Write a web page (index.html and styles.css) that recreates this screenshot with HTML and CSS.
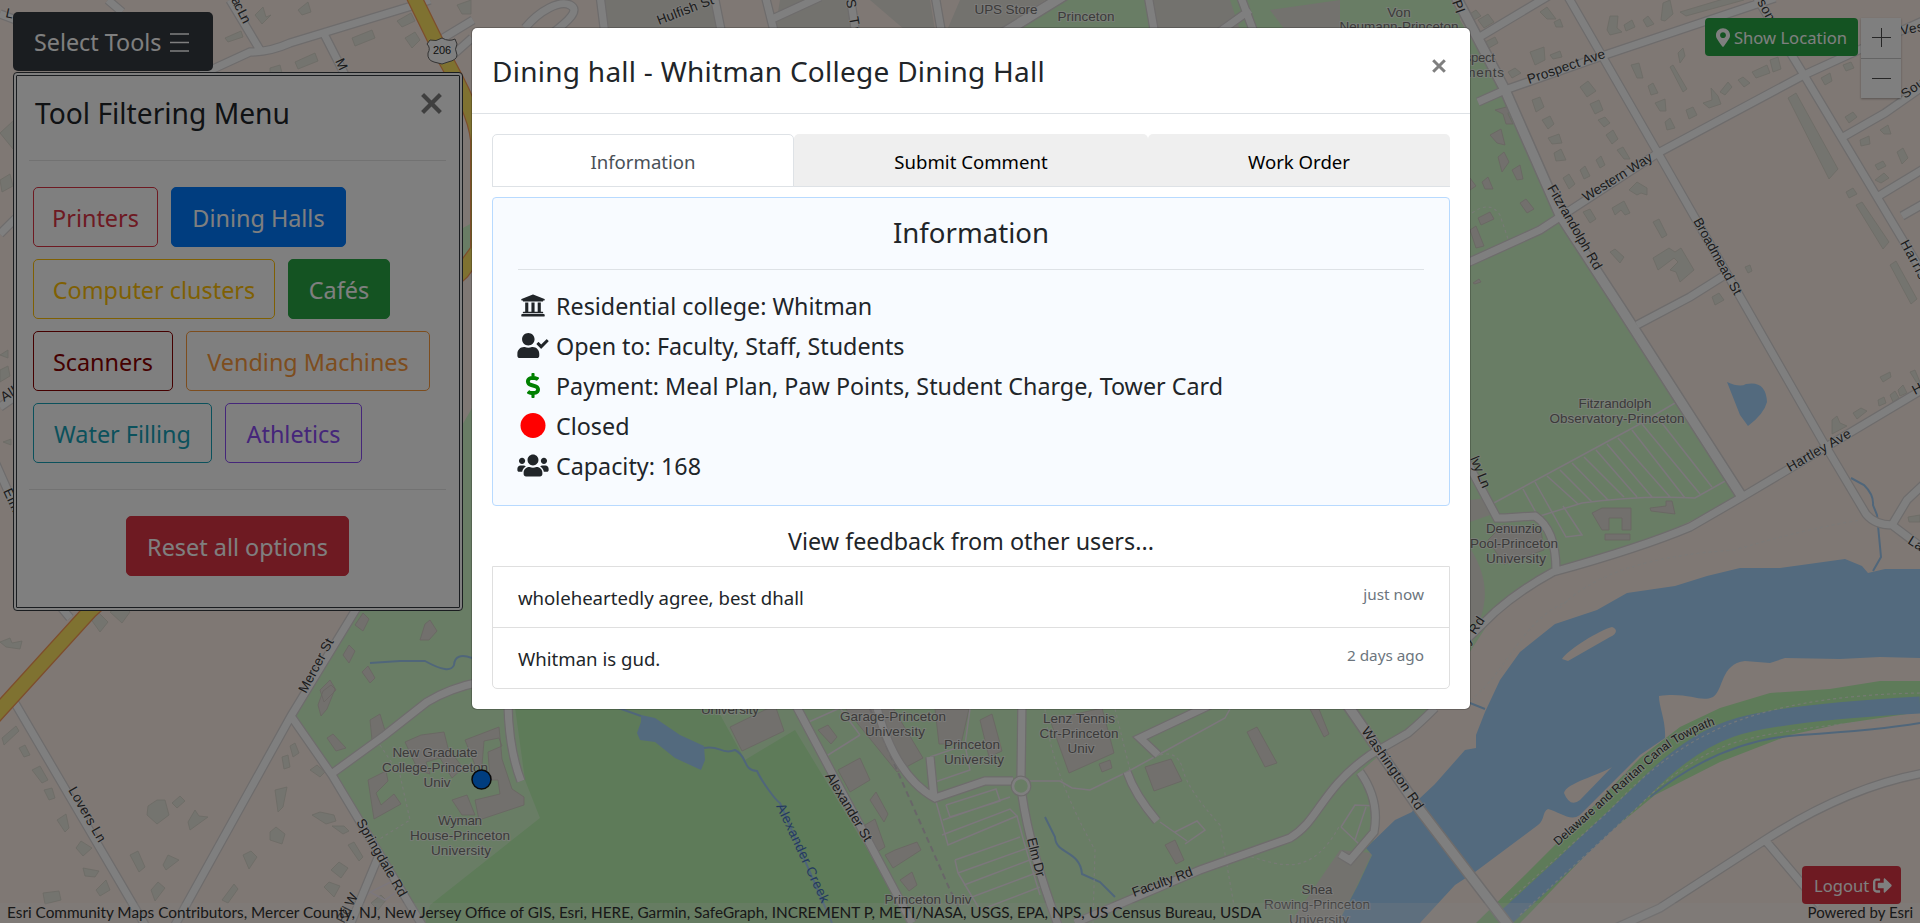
FILE: index.html
```html
<!DOCTYPE html>
<html lang="en">
<head>
<meta charset="utf-8">
<title>Campus Map</title>
<link rel="stylesheet" href="styles.css">
</head>
<body>
<main class="app">
<svg class="map" width="1920" height="923" viewBox="0 0 1920 923">
  <defs>
    <path id="minor" d="M108 0L122 12M200 75L250 52Q270 52 290 43L415 5L430 0M230 0L260 50M322 30L345 75M445 62L472 38M0 234L16 218M0 407L16 396M-5 462L20 518M0 14L16 20M358 606L291 716L175 925M291 716L332 775L422 925M330 775L385 735L427 702Q450 688 480 682M508 705Q509 750 521 781M12 698L145 925M55 600L70 618M379 855L350 925M440 40L473 20M793 700L912 923M875 700Q893 775 935 798L985 781H1013M930 757L934 798M1022 700L1021 777M1022 795Q1030 850 1058 925M1127 772Q1135 795 1157 821M1210 705L1140 738L1158 755M1075 923L1200 870L1290 838C1320 820 1320 790 1370 755L1408 733Q1420 723 1435 708M1478 38L1550 -5M1478 102L1505 90L1605 55L1775 -2M1567 -5L1658 153L1822 440L1866 514Q1875 525 1892 525L1907 500L1925 483M1892 525L1925 550M1465 264L1540 230L1658 153L1804 75L1925 20M1755 -5L1804 75L1925 277M1843 137L1885 113L1925 85M1877 197L1925 168M1902 216L1925 203M1637 325L1690 297L1725 275M1925 388L1742 497L1690 527Q1640 548 1553 572Q1520 590 1495 612L1466 640M1466 460L1497 518H1505L1535 516Q1556 530 1556 570M1360 772Q1380 800 1374 832L1350 860L1340 854M1600 935L1660 908L1765 840Q1850 785 1930 772M1765 840L1820 905M525 28C540 10 560 0 570 5S570 20 550 35M600 -5L605 35M714 -5L722 35M765 -5L775 35M770 20L820 -3M850 -5L856 35M935 -5L942 35M1148 -5L1155 35M1240 -5L1255 35M1215 35L1250 10"/>
    <path id="major" d="M1344 700L1420 810L1512 930M1455 -5L1505 90L1560 215L1622 310L1742 497M1000 35L1065 -5"/>
  </defs>
  <rect class="land" width="1920" height="923"/>
  <!-- campus and parks -->
  <path class="campus" d="M472 408L358 606L292 714L332 775L420 923H1345L1372 855L1378 806L1360 772L1433 709L1497 610L1553 572L1640 545L1742 497L1620 310L1560 215L1505 95L1460 20V0H1170L1060 0L990 35L800 400Z"/>
  <path class="campus" d="M463 228L472 223V255L463 262Z"/>
  <path class="golf" d="M514 700H712L745 760L795 730L912 923H425L430 905L540 818L525 780Z"/>
  <path class="block" d="M600 0H715L720 30H610ZM780 0H850L855 30H775ZM870 0H930L935 30H905ZM960 0H1045L990 35H945ZM1145 0H1230L1240 30H1150ZM1270 10L1340 0V30H1285ZM1470 500L1487 498L1490 515L1470 522ZM1470 548C1487 575 1488 597 1480 620L1470 625ZM1340 850L1372 853L1355 890L1338 923H1290Z"/>
  <!-- water -->
  <path class="water" d="M1597 610L1627 593L1675 586L1707 576L1740 568L1780 568L1845 559L1862 566L1868 573L1885 569H1920V658L1880 657L1840 659L1785 658L1770 663L1745 661C1720 664 1724 690 1713 697C1700 703 1690 692 1659 696C1659 708 1666 720 1665 738L1640 755L1580 815C1570 822 1560 812 1548 809C1542 812 1545 820 1538 825L1475 872L1455 885L1420 923H1338L1358 885L1372 855L1366 848L1395 820L1412 812L1418 800L1435 784L1465 750L1476 748L1476 735L1485 712L1500 680L1520 652L1555 624Z"/>
  <path class="land" d="M1562 659C1567 650 1600 630 1612 627C1618 629 1617 634 1610 637L1568 661ZM1564 793C1566 783 1600 775 1612 767L1580 800Q1570 808 1564 793Z"/>
  <path class="golf" d="M1476 923L1530 870L1580 820L1640 758L1680 727L1720 708L1770 693L1830 689L1880 681H1920V712L1840 724L1790 735L1720 762L1655 795L1600 840L1530 913L1520 923Z"/>
  <path class="canal" d="M1500 923L1560 868L1640 793Q1685 745 1730 729T1920 705"/>
  <path class="water" d="M641 715L655 718L680 735L704 746L705 760L701 770L675 758L655 742L640 740L637 733L641 722ZM1727 382Q1740 388 1746 384Q1766 380 1767 402Q1764 414 1748 426L1740 415Z"/>
  <path class="stream" d="M370 663L400 661L425 661Q450 675 454 665Q455 652 472 658M610 705L641 716M704 748C720 745 722 755 735 750C748 756 742 770 757 771C761 780 775 800 780 803L832 923M1851 478L1864 485Q1874 495 1873 505L1877 515L1881 557L1873 571M1045 817L1055 837C1056 855 1080 850 1082 874L1100 882L1115 897M1470 703L1485 709M1650 797Q1720 740 1800 735T1920 723"/>
  <!-- buildings -->
  <path class="house" d="M255 15l8-8 3 10 5-2-9 9zM298 10l10-8 3 10-9 3zM352 38l20-8 3 8-20 8zM397 21l14-8 4 8-13 6zM225 38l16-7 2 6-15 5zM295 62l20-9 3 8-20 8zM405 38l10-6 5 8-8 8zM457 5l14-5v14l-9 0zM270 68l10-3 2 8-12 0zM0 133l13-12v28zM0 180l10-6 3 12-11 6zM0 355l8-5v8zM3 442l8-3v6zM0 370l8-4 2 10-10 6z"/>
  <path class="house" d="M2 738l14-12 3 5-15 14zM19 748l6-3 5 10-6 2zM32 770l8-4 8 14-6 3zM44 790l8-2 3 10-6 2zM0 642l10-4 2 5 10-2-2 8-14-2zM90 618l8-6 10 10-8 10zM110 612l12-8 8 8-8 11zM148 806l9-6h8l4 15-12 9-10-9zM172 803l8-7 5 5-8 7zM188 822l7-12 4 6 9 1-18 13zM57 820l9-6 3 14-4 4zM76 848l5-7 11 7-9 8zM83 868l16 3-4 6-10-1zM96 890l10-10 4 10-10 6zM43 893l16-2 2 9-16 4zM130 855l8-4 7 16-6 5zM163 865l5-10 11 5-13 10zM151 890l7-8 7 6-10 13zM243 855l8-4 6 6-8 12zM275 790l12-3-4 20-5 5zM270 832l6-5 9 7-3 10-12-4zM310 770l7-5 8 7-5 5zM282 757l6-2 2 12-6 2zM290 746l5-3 4 10-6 4zM331 870l8-8 9 6-7 10zM348 845l6-3 9 15-4 4zM222 900l12-16 4 5-10 14zM312 815l8-3 14 3 2 6-10 3zM332 826l12 0 5 5-6 3zM324 887l5-5 11 4-6 11zM371 903l10-8 5 5-8 10z"/>
  <path class="house" d="M1468 15l8-5 5 6-9 5zM1485 42l10-5 3 6-9 5zM1478 20l10-6 6 8-10 6zM1540 12l7-5 9 12-9 0zM1554 22l6-3 3 8-7 0zM1607 30l3-14h8l-1 12 5 4-12 3zM1624 25l8-5 3 7-9 4zM1643 20l5-4 6 8-7 3zM1661 20l2-17 7-3 3 14-8 7zM1680 12l60-18 4 6-58 16zM1530 52l14-5 1 13-10 5zM1508 72l7-4 6 5-9 5zM1550 55l10-4 2 6-9 2zM1580 87l8-6 8 10-9 6zM1532 100l8-3 4 10-8 5zM1542 120l8-4 4 8-6 5zM1590 104l9-4 4 10-8 4zM1598 120l7-3 5 6-6 4zM1548 138l11-4 3 9-10 1zM1606 135l7-5 5 9-6 5zM1554 153l7-4 5 11-10 1zM1617 150l6-3 7 12-6 0zM1596 160l5-4 4 9-5 3zM1580 170l5-4 5 10-6 3zM1563 178l6-4 6 10-6 5zM1631 65l8-2 4 15-6 0zM1648 86l5-3 5 10-7 2zM1655 103l10-4 1 12-6 0zM1665 122l5-4 5 10-8 2zM1686 110l7-3 4 8-8 4zM1670 67l3-2 14 24-4 3zM1678 53l5-5 2 8-5 7zM1703 103l9-3-1-12 7 8 3 8-12 4zM1720 92l8-10 4 5-7 8zM1738 80l5-3 7 6-6 4zM1752 72l15-7 3 8-14 5zM1770 60l8-3 3 12-8 3zM1788 98l8-5 42 76-9 10zM1821 78l9-5 2 8-7 4zM1843 65l8-3 3 6-8 3zM1845 117l8-5 4 5-8 6zM1870 60l12-2 3 9-10 3zM1860 140l9-4 1 8-9 2zM1880 130l8-5 3 9-7 0zM1897 152l6-4 5 10-6 6zM1875 165l8-4 3 5-8 4zM1875 180l9-7 5 5-8 5zM1846 192l7-4 4 6-8 4zM1856 205l6-3 27 40-6 7zM1890 265l6-4 21 38-6 5zM1629 190l8-8 10 6v7l-6-2-4 2zM1612 208l12-7 6 12-5 2-4-5-6 5zM1583 212l7-3 6 10-6 4zM1653 222l6-3 8 16-5 3zM1653 258l16-10 6 4 6-4 13 22-14 12-4-10-6-2 8-8-4-4-16 12zM1610 252l5-3 9 8-4 6zM1712 297l7-4 5 7-9 5zM1745 267l5-2 2 6-4 2zM1832 420l5-4 3 7 7 3-15 8zM1853 413l8-5 6 3-10 8zM1878 400l6-3 2 6-7 3zM1890 395l5-4 4 7-6 4zM1880 377l10-5 1 5-8 5zM1898 390l5-5 4 8-7 3zM1910 372l5-2 5 12v6zM1908 517l12-2v7h-11z"/>
  <path class="building" d="M370 720l10-6 6 20-6 10-8-4zM320 690l10-10 6 10-12 12zM318 705l5-14 8-6 4 4-8 20-6 7zM420 640l5-16 5-4 7 11-8 9zM355 625l8-12 6 6-6 12zM343 655l6-10 6 6-6 12zM362 672l6-6 7 12-5 5zM327 738l6-4 13 14-10 3zM405 742l16-7 23-3 4 16 15 20-11 10-12-20-14 4 4 12-12-4zM368 780l18-9 2 10-12 12 5 12 13-11 7 10-27 15zM465 740l34-13 3 32 10 30 12 8v8l-45 15-4-20 25-6-2-14-8 0-2-28 14-6-3-8-15 3-2 24-7 0zM452 800l15-5 8 20-13 0z"/>
  <path class="building" d="M730 727l45-22 9 26-42 20zM838 770l22-12 10 22-20 12zM818 730l10-5 9 12-6 7zM845 708l36-20 42 70-26 14zM935 709h34l-8 35-22 0zM980 720l12-6 10 37-13 6zM870 800l6-8 12 22-4 8zM865 825l10-6 10 28-8 5zM885 855l10-5 22-8 4 8-28 18zM900 880l12-8 5 13-8 6zM1050 720l52-12 12 45-45 20zM1099 764l11-4 2 8-10 4zM1145 767l26-8 11 22-28 10zM1165 845l10-5 9 20-8 4zM1247 732l10-5 20 36-12 4zM1310 709h9l10 25-5 3zM1495 110l15-4-2 8 5 10-7 0-3-10zM1490 135l11-6 4 16-8-2zM1498 157l6-5 5 10-7 10zM1512 170l8-5 3 14-6 1zM1482 182l6-5 5 12-8 0zM1520 203l6-4 8 10-7 4zM1470 190l0-12 6 8zM1478 218l12-6 4 7-13 6zM1470 230l6-4 8 20-8 2zM1473 283l6-4 2 3-6 2zM1592 513l10-5h29v22h-9v-12h-13v12h-7zM1605 534h25v6h-25zM1650 508l16-2 0-5h6l3 13-24-3zM1488 540l15-15 38 5 3 20-40 14z"/>
  <!-- parking lots and footpaths -->
  <path class="lot" d="M1492 504L1638 425L1680 400M1540 516L1582 503Q1640 495 1695 498L1727 480M1523 489L1540 520M1535 482L1566 537L1582 535L1563 506M1547 476L1578 504M1560 470L1592 502M1572 463L1608 500M1584 457L1624 497M1596 450L1637 497M1607 444L1652 497M1618 438L1670 497M1632 430L1685 498M1642 424L1700 494M1658 418L1712 487M802 725L840 708M860 735L820 760M840 708L860 735M930 757L965 745L970 770L935 782M970 709L965 745M946 805L996 789L1000 801L950 817L946 805M935 798L948 845L1017 816L1010 809L942 835M943 820L1010 797M955 860L1020 837M955 860L958 873L980 910M958 873L1028 848M964 885L1035 858M972 897L1036 873M980 910L1040 887M1017 816L1024 842L1040 895M1030 781L1060 781L1072 788L1090 790L1127 772L1158 755L1225 718L1230 709M1160 822L1187 841M1175 832L1197 821L1205 830L1185 844M1341 827L1355 805L1377 806M1341 827L1360 845M1366 807L1355 840M362 900L370 892L395 880M370 892L385 900L395 893"/>
  <path class="trail" d="M380 745L400 775L410 820L378 840M1045 709Q1050 770 1095 850L1093 923M1115 709L1130 770M1160 755Q1178 750 1183 770T1220 825L1237 923M1245 855C1280 865 1310 880 1340 825M1472 213Q1490 200 1500 215L1510 245M1560 608C1590 575 1650 555 1735 550Q1800 530 1860 520M1470 700C1510 670 1520 620 1570 600M1510 900L1610 810Q1670 745 1740 720T1920 693M1520 915L1640 805Q1690 755 1740 741T1920 717"/>
  <path class="rail" d="M870 709L950 890L960 910"/>
  <!-- roads: casing, then fill -->
  <g class="casing"><use class="narrow" href="#minor"/><use class="broad" href="#major"/></g>
  <g class="surface"><use class="narrow" href="#minor"/><use class="broad" href="#major"/></g>
  <circle class="ring-edge" cx="1021" cy="786" r="8"/>
  <circle class="ring" cx="1021" cy="786" r="8"/>
  <path class="hwy-edge" d="M413 -5L440 50Q475 110 478 140V250L462 272L90 611L-10 721"/>
  <path class="hwy" d="M413 -5L440 50Q475 110 478 140V250L462 272L90 611L-10 721"/>
  <path class="shield" d="M430 40Q436 42 442 38Q449 42 455 39L457 44Q454 49 457 55Q457 60 448 62L442 64L434 62Q427 60 428 53Q431 48 427 44Z"/>
  <text class="shield-text" x="433" y="54" textLength="18">206</text>
  <!-- street labels -->
  <g class="street">
    <text transform="translate(5 17) rotate(12)">L</text>
    <text transform="translate(231 0) rotate(63)" textLength="28">ac Ln</text>
    <text transform="translate(335 61) rotate(65)" textLength="24">Mo</text>
    <text transform="translate(253 94) scale(1)"></text>
    <text transform="translate(306 694) rotate(-62)" textLength="60">Mercer St</text>
    <text transform="translate(68 790) rotate(60)" textLength="62">Lovers Ln</text>
    <text transform="translate(356 822) rotate(60)" textLength="88">Springdale Rd</text>
    <text transform="translate(344 924) rotate(-63)" textLength="32">Rd W</text>
    <text transform="translate(659 25) rotate(-21)" textLength="60">Hulfish St</text>
    <text transform="translate(846 0) rotate(80)" textLength="42">S Tul</text>
    <text transform="translate(4 402) rotate(-32)">All</text>
    <text transform="translate(3 491) rotate(65)">Elm</text>
    <text transform="translate(825 776) rotate(59)" textLength="78">Alexander St</text>
    <text transform="translate(1027 839) rotate(76)" textLength="40">Elm Dr</text>
    <text transform="translate(1134 897) rotate(-20)" textLength="64">Faculty Rd</text>
    <text transform="translate(1361 731) rotate(55)" textLength="98">Washington Rd</text>
    <text transform="translate(1529 84) rotate(-19)" textLength="82">Prospect Ave</text>
    <text transform="translate(1586 202) rotate(-32)" textLength="80">Western Way</text>
    <text transform="translate(1547 188) rotate(60)" textLength="96">Fitzrandolph Rd</text>
    <text transform="translate(1693 221) rotate(61)" textLength="86">Broadmead St</text>
    <text transform="translate(1900 243) rotate(62)" textLength="60">Harrison</text>
    <text transform="translate(1757 2) rotate(62)">son</text>
    <text transform="translate(1901 35) rotate(-10)">Vest</text>
    <text transform="translate(1905 99) rotate(-35)">Sou</text>
    <text transform="translate(1790 472) rotate(-30)" textLength="72">Hartley Ave</text>
    <text transform="translate(1915 395) rotate(-28)">H</text>
    <text transform="translate(1907 543) rotate(32)">La</text>
    <text transform="translate(1470 458) rotate(68)" textLength="34">Ivy Ln</text>
    <text transform="translate(1469 645) rotate(-57)" textLength="30">y Rd</text>
    <text transform="translate(1452 2) rotate(70)">Pl</text>
  </g>
  <path id="towpath" class="guide" d="M1558 846L1660 755Q1690 731 1730 720"/>
  <text class="street tow"><textPath href="#towpath" textLength="200">Delaware and Raritan Canal Towpath</textPath></text>
  <text class="creek" transform="translate(776 806) rotate(65)" textLength="108">Alexander Creek</text>
  <!-- place labels -->
  <g class="place">
    <text x="435" y="757" textLength="85">New Graduate</text><text x="435" y="772" textLength="106">College-Princeton</text><text x="437" y="787" textLength="27">Univ</text>
    <text x="460" y="825" textLength="44">Wyman</text><text x="460" y="840" textLength="100">House-Princeton</text><text x="461" y="855" textLength="60">University</text>
    <text x="1006" y="14" textLength="63">UPS Store</text><text x="1086" y="21" textLength="57">Princeton</text>
    <text x="1399" y="17">Von</text><text x="1399" y="31" textLength="119">Neumann-Princeton</text>
    <text x="1470" y="62" textLength="50">Prospect</text><text x="1466" y="77" textLength="76">Apartments</text>
    <text x="1615" y="408" textLength="73">Fitzrandolph</text><text x="1617" y="423" textLength="135">Observatory-Princeton</text>
    <text x="1514" y="533" textLength="56">Denunzio</text><text x="1514" y="548" textLength="88">Pool-Princeton</text><text x="1516" y="563" textLength="60">University</text>
    <text x="730" y="714" textLength="58">University</text>
    <text x="893" y="721" textLength="106">Garage-Princeton</text><text x="895" y="736" textLength="60">University</text>
    <text x="972" y="749" textLength="56">Princeton</text><text x="974" y="764" textLength="60">University</text>
    <text x="1079" y="723" textLength="72">Lenz Tennis</text><text x="1079" y="738" textLength="79">Ctr-Princeton</text><text x="1081" y="753" textLength="27">Univ</text>
    <text x="928" y="904" textLength="87">Princeton Univ</text>
    <text x="1317" y="894" textLength="31">Shea</text><text x="1317" y="909" textLength="106">Rowing-Princeton</text><text x="1319" y="924" textLength="60">University</text>
  </g>
  <circle class="marker" cx="481.500" cy="779.500" r="9.500"/>
</svg>

<footer class="attribution"><span class="sources">Esri Community Maps Contributors, Mercer County, NJ, New Jersey Office of GIS, Esri, HERE, Garmin, SafeGraph, INCREMENT P, METI/NASA, USGS, EPA, NPS, US Census Bureau, USDA</span><span class="powered">Powered by Esri</span></footer>

<div class="controls">
  <button class="btn-small success"><svg class="pin" viewBox="0 0 384 512"><path d="M172.268 501.67C26.97 291.031 0 269.413 0 192 0 85.961 85.961 0 192 0s192 85.961 192 192c0 77.413-26.97 99.031-172.268 309.67-9.535 13.774-29.93 13.773-39.464 0zM192 272c44.183 0 80-35.817 80-80s-35.817-80-80-80-80 35.817-80 80 35.817 80 80 80z"/></svg><span>Show Location</span></button>
  <div class="zoom"><button><svg viewBox="0 0 20 20"><path d="M.5 9.500h19M10.500 0v19"/></svg></button><button><svg viewBox="0 0 20 20"><path d="M.5 9.500h19"/></svg></button></div>
</div>
<button class="btn-small danger logout"><span>Logout</span><svg class="exit" viewBox="0 0 512 512"><path d="M497 273L329 441c-15 15-41 4.500-41-17v-96H152c-13.300 0-24-10.700-24-24v-96c0-13.300 10.700-24 24-24h136V88c0-21.400 25.900-32 41-17l168 168c9.300 9.400 9.300 24.600 0 34zM192 436v-40c0-6.600-5.400-12-12-12H96c-17.700 0-32-14.300-32-32V160c0-17.700 14.300-32 32-32h84c6.600 0 12-5.400 12-12V76c0-6.600-5.400-12-12-12H96c-53 0-96 43-96 96v192c0 53 43 96 96 96h84c6.600 0 12-5.400 12-12z"/></svg></button>

<aside class="tools">
  <button class="select-tools"><span>Select Tools</span><svg class="bars" viewBox="0 0 19 19"><path d="M0 1h19M0 9.500h19M0 18h19"/></svg></button>
  <section class="panel">
    <header class="panel-head"><h2>Tool Filtering Menu</h2><svg class="close-lg" viewBox="0 0 20 20"><path d="M1.500 1.500l17 17M18.500 1.500l-17 17"/></svg></header>
    <hr>
    <div class="filters">
      <button class="btn w-printers">Printers</button><button class="btn w-dining">Dining Halls</button>
      <button class="btn w-clusters">Computer clusters</button><button class="btn w-cafes">Cafés</button>
      <button class="btn w-scanners">Scanners</button><button class="btn w-vending">Vending Machines</button>
      <button class="btn w-water">Water Filling</button><button class="btn w-athletics">Athletics</button>
    </div>
    <hr>
    <button class="btn w-reset">Reset all options</button>
  </section>
</aside>

<div class="backdrop">
  <div class="modal">
    <header class="modal-head"><h1>Dining hall - Whitman College Dining Hall</h1><svg class="close-sm" viewBox="0 0 14 14"><path d="M1.200 1.200l11.600 11.600M12.800 1.200L1.200 12.800"/></svg></header>
    <div class="modal-body">
      <nav class="tabs"><button class="tab active">Information</button><button class="tab wide">Submit Comment</button><button class="tab">Work Order</button></nav>
      <section class="card">
        <h2>Information</h2>
        <ul class="facts">
          <li><svg class="ico" viewBox="0 0 512 512"><path d="M496 128v16a8 8 0 0 1-8 8h-24v12c0 6.627-5.373 12-12 12H60c-6.627 0-12-5.373-12-12v-12H24a8 8 0 0 1-8-8v-16a8 8 0 0 1 4.941-7.392l232-88a7.996 7.996 0 0 1 6.118 0l232 88A8 8 0 0 1 496 128zm-24 304H40c-13.255 0-24 10.745-24 24v16a8 8 0 0 0 8 8h464a8 8 0 0 0 8-8v-16c0-13.255-10.745-24-24-24zM96 192v192H60c-6.627 0-12 5.373-12 12v20h416v-20c0-6.627-5.373-12-12-12h-36V192h-64v192h-64V192h-64v192h-64V192H96z"/></svg><span>Residential college: Whitman</span></li>
          <li><svg class="ico" viewBox="0 0 640 512"><path d="M224 256c70.700 0 128-57.300 128-128S294.700 0 224 0 96 57.300 96 128s57.300 128 128 128zm89.600 32h-16.700c-22.200 10.200-46.900 16-72.900 16s-50.600-5.800-72.900-16h-16.700C60.200 288 0 348.200 0 422.400V464c0 26.500 21.500 48 48 48h352c26.500 0 48-21.500 48-48v-41.600c0-74.200-60.200-134.400-134.400-134.400zm323-128.400l-27.800-28.100c-4.600-4.700-12.100-4.700-16.800-.1l-104.800 104-45.500-45.800c-4.600-4.700-12.100-4.700-16.800-.1l-28.100 27.900c-4.700 4.600-4.700 12.100-.1 16.800l81.700 82.300c4.600 4.700 12.100 4.700 16.800.1l141.300-140.200c4.600-4.700 4.700-12.200.1-16.800z"/></svg><span>Open to: Faculty, Staff, Students</span></li>
          <li><svg class="ico money" viewBox="0 0 288 512"><path d="M209.200 233.400l-108-31.600C88.700 198.200 80 186.500 80 173.500c0-16.300 13.200-29.500 29.500-29.500h66.300c12.200 0 24.200 3.700 34.200 10.500 6.100 4.100 14.300 3.100 19.500-2l34.800-34c7.100-6.900 6.100-18.400-1.800-24.500C238 74.800 207.400 64.100 176 64V16c0-8.800-7.200-16-16-16h-32c-8.800 0-16 7.200-16 16v48h-2.500C45.800 64-5.400 118.700.5 183.600c4.200 46.100 39.400 83.600 83.800 96.600l102.500 30c12.500 3.700 21.200 15.300 21.200 28.300 0 16.300-13.200 29.500-29.500 29.500h-66.300C100 368 88 364.300 78 357.500c-6.100-4.100-14.300-3.100-19.500 2l-34.800 34c-7.100 6.900-6.100 18.400 1.800 24.500 24.500 19.200 55.100 29.900 86.500 30v48c0 8.800 7.200 16 16 16h32c8.800 0 16-7.200 16-16v-48.200c46.600-.9 90.300-28.600 105.700-72.700 21.500-61.600-14.600-124.800-72.500-141.700z"/></svg><span>Payment: Meal Plan, Paw Points, Student Charge, Tower Card</span></li>
          <li><svg class="ico closed" viewBox="0 0 512 512"><circle cx="256" cy="256" r="256"/></svg><span>Closed</span></li>
          <li><svg class="ico" viewBox="0 0 640 512"><path d="M96 224c35.300 0 64-28.700 64-64s-28.700-64-64-64-64 28.700-64 64 28.700 64 64 64zm448 0c35.300 0 64-28.700 64-64s-28.700-64-64-64-64 28.700-64 64 28.700 64 64 64zm32 32h-64c-17.600 0-33.500 7.100-45.100 18.600 40.300 22.100 68.900 62 75.100 109.400h66c17.700 0 32-14.300 32-32v-32c0-35.300-28.700-64-64-64zm-256 0c61.900 0 112-50.100 112-112S381.900 32 320 32 208 82.100 208 144s50.100 112 112 112zm76.800 32h-8.300c-20.800 10-43.900 16-68.500 16s-47.600-6-68.500-16h-8.300C179.600 288 128 339.600 128 403.200V432c0 26.500 21.500 48 48 48h288c26.500 0 48-21.500 48-48v-28.800c0-63.600-51.600-115.200-115.200-115.200zm-223.700-13.400C161.500 263.100 145.600 256 128 256H64c-35.300 0-64 28.700-64 64v32c0 17.700 14.300 32 32 32h65.900c6.300-47.400 34.900-87.300 75.200-109.400z"/></svg><span>Capacity: 168</span></li>
        </ul>
      </section>
      <h3>View feedback from other users...</h3>
      <ul class="feedback">
        <li><span>wholeheartedly agree, best dhall</span><time>just now</time></li>
        <li><span>Whitman is gud.</span><time>2 days ago</time></li>
      </ul>
    </div>
  </div>
</div>
</main>
</body>
</html>
```
FILE: styles.css
```css
* { box-sizing: border-box; }
body { margin: 0; font-family: "Noto Sans", "Open Sans", sans-serif; color: #212529; }
button { font-family: inherit; margin: 0; padding: 0; border: 0; }
h1, h2, h3, ul { margin: 0; padding: 0; font-weight: 400; list-style: none; }
.app { position: relative; width: 1920px; height: 923px; overflow: hidden; }

/* map */
.map { display: block; }
.map path { fill: none; }
.map .land { fill: #fef0e8; }
.map .campus { fill: #d2faca; }
.map .golf { fill: #bcf6b2; }
.map .block { fill: #e6e4dc; }
.map .water { fill: #a6d4fc; }
.map .canal { stroke: #a6d4fc; stroke-width: 17; }
.map .stream { stroke: #a0cdf5; stroke-width: 2; }
.map .house { fill: #e8e8de; stroke: #d8d6ca; stroke-width: .8; }
.map .building { fill: #e4e0da; stroke: #d2cac4; stroke-width: .8; }
.map .lot { stroke: #f8eef8; stroke-width: 1.5; }
.map .trail { stroke: #f4f4f0; stroke-width: 1.2; stroke-dasharray: 3 3; opacity: .8; }
.map .rail { stroke: #d0ccd0; stroke-width: 2; stroke-dasharray: 6 4; }
.casing { stroke: #dcd8d8; }
.casing .narrow { stroke-width: 9.5; }
.casing .broad { stroke-width: 12; }
.surface { stroke: #fff; }
.surface .narrow { stroke-width: 7; }
.surface .broad { stroke-width: 9; }
.ring-edge { fill: none; stroke: #dcd8d8; stroke-width: 5; }
.ring { fill: #d2faca; stroke: #fff; stroke-width: 2.5; }
.map .hwy-edge { stroke: #fb9c58; stroke-width: 16; }
.map .hwy { stroke: #ffe462; stroke-width: 13.5; }
.map .shield { fill: #fff; stroke: #666; }
.shield-text { font: 11px "Liberation Sans", sans-serif; fill: #222; }
.street { font: 13.5px "Liberation Sans", Arial, sans-serif; fill: #383838; letter-spacing: .5px; paint-order: stroke; stroke: #fff8; stroke-width: 2px; }
.tow { font-size: 12px; letter-spacing: 0; stroke: #fffb; }
.creek { font: 13.5px "Liberation Sans", Arial, sans-serif; fill: #4874c0; }
.place { font: 13.5px "Liberation Sans", Arial, sans-serif; fill: #787674; text-anchor: middle; paint-order: stroke; stroke: #fffa; stroke-width: 2px; }
.marker { fill: #007bff; stroke: #111; stroke-width: 1.5; }

.attribution { position: absolute; left: 0; right: 0; bottom: 0; height: 20px; padding: 0 7px; display: flex; justify-content: space-between; background: rgba(255,255,255,.25); color: #323232; font: 15.35px/19px Lato, sans-serif; white-space: nowrap; }
.powered { font-size: 15px; }

/* map controls */
.controls { position: absolute; top: 18px; right: 19px; display: flex; align-items: flex-start; gap: 3px; }
.btn-small { height: 38px; border-radius: 4px; color: #fff; display: flex; align-items: center; font-size: 16.6px; white-space: nowrap; }
.btn-small svg { fill: #fff; }
.success { width: 153px; background: #28a745; padding-left: 11px; gap: 4px; }
.danger { background: #dc3545; }
.pin { width: 14px; height: 19px; }
.zoom { width: 40px; background: #fff; box-shadow: 0 1px 2px rgba(0,0,0,.3); }
.zoom button { display: flex; width: 40px; height: 40px; align-items: center; justify-content: center; background: none; }
.zoom button + button { border-top: 1px solid #c8c8c8; }
.zoom svg { width: 20px; height: 20px; stroke: #4c4c4c; stroke-width: 1; }
.zoom path { shape-rendering: crispEdges; }
.logout { position: absolute; right: 19px; bottom: 19px; width: 99px; padding-left: 12px; gap: 4px; }
.exit { width: 19px; height: 19px; }

/* tool filters */
.tools { position: absolute; left: 13px; top: 12px; width: 450px; }
.select-tools { width: 200px; height: 59px; border-radius: 5px; background: #343a40; color: #fff; font-size: 23.3px; display: flex; align-items: center; padding: 1px 0 0 21px; gap: 9px; white-space: nowrap; }
.bars { width: 19px; height: 19px; stroke: #fff; stroke-width: 1.6; }
.panel { margin-top: 1px; height: 539px; border: 4px double #343a40; border-radius: 4px; background: #fff; padding: 0 13px 0 12px; }
.panel-head { display: flex; justify-content: space-between; height: 84px; padding: 15px 4px 0 6px; }
.panel-head h2 { font-size: 28.200px; line-height: 44px; white-space: nowrap; }
.close-lg { width: 21px; height: 21px; margin-top: 2px; stroke: #7f7f7f; stroke-width: 4; }
hr { margin: 0; border: 0; height: 1px; background: rgba(0,0,0,.1); }
.filters { display: flex; flex-wrap: wrap; gap: 12px 13px; padding: 26px 0 26px 4px; }
.btn { height: 60px; padding-top: 2px; border: 1px solid; border-radius: 5px; background: #fff; font-size: 23.400px; white-space: nowrap; text-align: center; }
.w-printers { width: 125px; color: #dc3545; }
.w-dining { width: 175px; background: #007bff; border-color: #007bff; color: #fff; }
.w-clusters { width: 242px; color: #ffc107; }
.w-cafes { width: 102px; background: #28a745; border-color: #28a745; color: #fff; }
.w-scanners { width: 140px; color: #8b0000; }
.w-vending { width: 244px; color: #fb9a3c; }
.w-water { width: 179px; color: #17a2b8; }
.w-athletics { width: 137px; color: #8a4cf5; }
.w-reset { display: block; width: 223px; margin: 26px 0 0 97px; background: #dc3545; border-color: #dc3545; color: #fff; }

/* modal */
.backdrop { position: absolute; inset: 0; background: rgba(0,0,0,.5); padding: 27px 0 0 471px; }
.modal { width: 1000px; height: 683px; border: 1px solid rgba(0,0,0,.2); border-radius: 6px; background: #fff; background-clip: padding-box; }
.modal-head { display: flex; justify-content: space-between; height: 86px; border-bottom: 1px solid #dee2e6; padding: 22px 24px 0 20px; }
.modal-head h1 { font-size: 28px; letter-spacing: .26px; line-height: 42px; white-space: nowrap; }
.close-sm { width: 14px; height: 14px; margin-top: 9px; stroke: #7f7f7f; stroke-width: 3; }
.modal-body { padding: 20px; }
.tabs { display: flex; height: 53px; border-bottom: 1px solid #dee2e6; }
.tab { width: 302px; height: 53px; padding-top: 2px; border-radius: 5px 5px 0 0; background: #efefef; border-bottom: 1px solid #dee2e6; font-size: 18.600px; color: #000; }
.tab.wide { width: 354px; }
.tab.active { padding-top: 1px; background: #fff; border: 1px solid #dee2e6; color: #495057; }
.card { height: 309px; margin-top: 10px; border: 1px solid #b8daff; border-radius: 4px; background: #f8fbff; padding: 14px 25px 0; }
.card h2 { height: 58px; border-bottom: 1px solid #dee2e6; font-size: 27.600px; line-height: 41px; text-align: center; }
.facts { padding-top: 15px; }
.facts li { display: flex; align-items: center; gap: 8px; height: 40px; font-size: 23.300px; white-space: nowrap; }
.facts span { padding-top: 1px; }
.ico { width: 32px; height: 25px; margin-left: -1px; margin-right: -1px; fill: #212529; }
.ico.money { fill: #008000; }
.ico.closed { fill: #f00; }
h3 { height: 60px; padding-top: 16px; font-size: 23.300px; line-height: 39px; text-align: center; }
.feedback { border: 1px solid #dfdfdf; border-radius: 0 0 5px 5px; }
.feedback li { display: flex; justify-content: space-between; height: 60px; padding: 16px 25px 0; font-size: 18.600px; line-height: 30px; }
.feedback li + li { height: 61px; border-top: 1px solid #dfdfdf; }
time { color: #6c757d; font-size: 15.300px; line-height: 22px; }
```
